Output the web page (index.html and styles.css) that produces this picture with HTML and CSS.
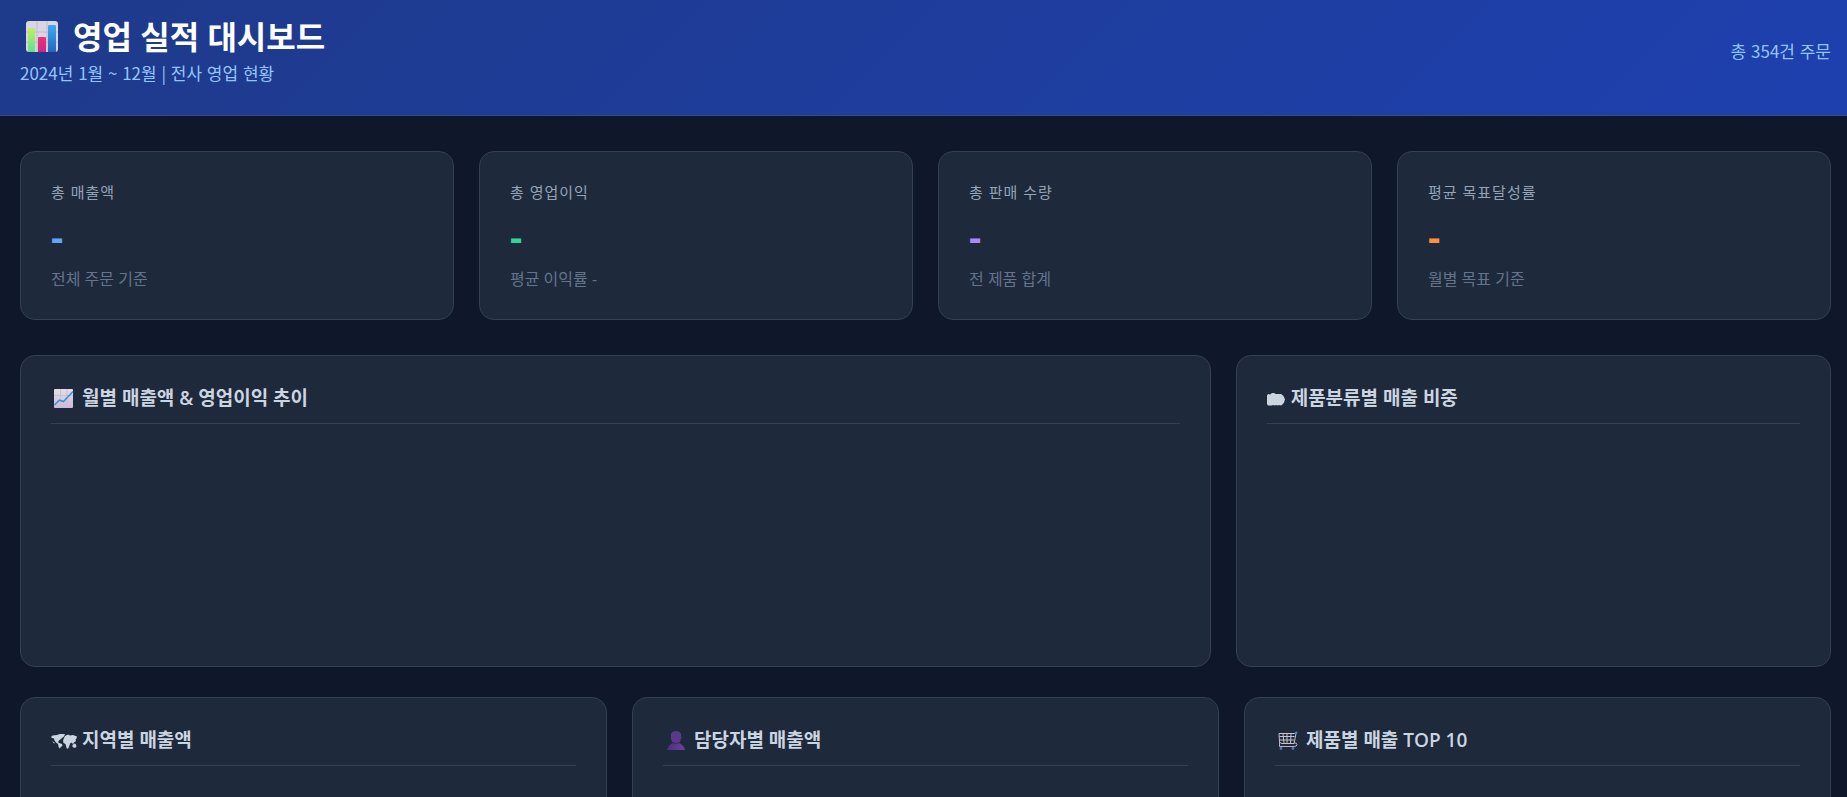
FILE: index.html
```html
<!DOCTYPE html>
<html lang="ko">
<head>
<meta charset="utf-8">
<title>영업 실적 대시보드</title>
<link rel="stylesheet" href="styles.css">
</head>
<body>
<header class="header">
  <div>
    <h1 class="title">
      <svg class="title-icon" viewBox="0 0 44 32" aria-hidden="true">
        <defs>
          <linearGradient id="green" x2="0" y2="1"><stop stop-color="#bdf25c"/><stop offset="1" stop-color="#5fe08e"/></linearGradient>
          <linearGradient id="blue" x2="0" y2="1"><stop stop-color="#3faaf5"/><stop offset="1" stop-color="#2168bd"/></linearGradient>
          <linearGradient id="pink" x2="0" y2="1"><stop stop-color="#f0307a"/><stop offset="1" stop-color="#c92a80"/></linearGradient>
        </defs>
        <rect x="6" y="0" width="32" height="31" rx="3" fill="#dad5e3"/>
        <path d="M17 0v31M27 0v31M6 11h32M6 21h32" stroke="#c3bcce" fill="none"/>
        <path d="M8 31V8q0-1 1-1h5q1 0 1 1v23z" fill="url(#green)"/>
        <path d="M18 31V17q0-1 1-1h6q1 0 1 1v14z" fill="url(#pink)"/>
        <path d="M28 31V5q0-1 1-1h6q1 0 1 1v26z" fill="url(#blue)"/>
      </svg>
      영업 실적 대시보드
    </h1>
    <p class="subtitle">2024년 1월 ~ 12월 | 전사 영업 현황</p>
  </div>
  <p class="order-count">총 354건 주문</p>
</header>
<main class="main">
  <section class="kpis">
    <article class="card"><h2 class="kpi-label">총 매출액</h2><p class="kpi-value blue">-</p><p class="kpi-note">전체 주문 기준</p></article>
    <article class="card"><h2 class="kpi-label">총 영업이익</h2><p class="kpi-value green">-</p><p class="kpi-note">평균 이익률 -</p></article>
    <article class="card"><h2 class="kpi-label">총 판매 수량</h2><p class="kpi-value purple">-</p><p class="kpi-note">전 제품 합계</p></article>
    <article class="card"><h2 class="kpi-label">평균 목표달성률</h2><p class="kpi-value orange">-</p><p class="kpi-note">월별 목표 기준</p></article>
  </section>
  <section class="charts charts-two">
    <article class="card">
      <h2 class="chart-title">
        <svg class="icon" viewBox="0 0 26 20" aria-hidden="true">
          <defs><linearGradient id="paper" x2="0" y2="1"><stop stop-color="#e2dfe8"/><stop offset="1" stop-color="#cdb9dc"/></linearGradient></defs>
          <rect x="3" y="0" width="19" height="19" rx="1" fill="url(#paper)"/>
          <path d="M9.500 0v19M16 0v19M3 6.500h19M3 13h19" stroke="#c9c0d2" fill="none"/>
          <path d="M3.500 16l5-5 4 1.500L22 2.500" stroke="#388fd5" stroke-width="1.500" fill="none"/>
        </svg>
        월별 매출액 &amp; 영업이익 추이
      </h2>
      <div class="chart"></div>
    </article>
    <article class="card">
      <h2 class="chart-title">
        <svg class="icon icon-narrow" viewBox="0 0 19 20" aria-hidden="true">
          <path d="M0 6.500l1-1.500 2 .5L5 4h2l2 1h5l2 1.500 1 1.500 1 2.500-1 3-1 1.500-2 1.500-2-.5-1 .5-2-.5-1 .5-2-.5-1 .5H1l-1-1.500z" fill="#cbd5e1"/>
        </svg>
        제품분류별 매출 비중
      </h2>
      <div class="chart"></div>
    </article>
  </section>
  <section class="charts charts-three">
    <article class="card">
      <h2 class="chart-title">
        <svg class="icon" viewBox="0 0 26 20" aria-hidden="true">
          <path fill="#cbd5e1" d="M0 6l1.500-1.500L6 4l3-1 5 0-1 2.500-2 1.500-1 1-1.500 1L7 11l1 1 3 1 .5 1.500L10 16l-1.500 1.500-1-2L7 13l-2-1.500-1.500-2L3 7.500 1 7zM1 10l3 2-1 .5zM13 7l1-2 3-1.500 2 1 3-.5 4 1.500-.5 2-1 1 .5 1.500-2 1.500-1 2-1-2-2 1-.500 2-1 2.500-1.500 1-1-3-.5-2-2-1-.5-2.500zM21.500 14l2-1.500 1.500 1 .5 2-1.500 1.500-2.500-1z"/>
        </svg>
        지역별 매출액
      </h2>
      <div class="chart"></div>
    </article>
    <article class="card">
      <h2 class="chart-title">
        <svg class="icon" viewBox="0 0 26 20" aria-hidden="true">
          <defs><linearGradient id="person" x2="1" y2="0"><stop stop-color="#4b3179"/><stop offset="1" stop-color="#6a409e"/></linearGradient></defs>
          <path d="M4 19q1-5 6-7h6q5 2 6 7z" fill="url(#person)"/>
          <path d="M8 3q1-3 5-3t5 3v2.500l1 1-1 1q-.5 5-5 5t-5-5z" fill="#5b378d"/>
          <path d="M9 11.500q4 2 8 0" fill="none" stroke="#3b285f"/>
        </svg>
        담당자별 매출액
      </h2>
      <div class="chart"></div>
    </article>
    <article class="card">
      <h2 class="chart-title">
        <svg class="icon" viewBox="0 0 26 20" aria-hidden="true">
          <path d="M4 2.500h17l-2 10H7q-2 0-2.500-2zM4.500 5.500h15M5 9h14M8 3l1 9M12 3v9M16 3l-.5 9" fill="none" stroke="#c8c2ce"/>
          <path d="M4.500 10v5.500H19q3 0 3-2t-3-1.500" fill="none" stroke="#b9b3c4"/>
          <path d="M20 3l2-2" stroke="#4c86d0" stroke-width="2"/>
          <circle cx="6" cy="17.500" r="1.400" fill="#4777bd"/><circle cx="18" cy="17.500" r="1.400" fill="#4777bd"/>
        </svg>
        제품별 매출 TOP 10
      </h2>
      <div class="chart"></div>
    </article>
  </section>
</main>
</body>
</html>
```
FILE: styles.css
```css
* {
  box-sizing: border-box;
  margin: 0;
}

body {
  height: 100vh;
  overflow: hidden;
  background: #0f172a;
  color: #cbd5e1;
  font: 16px/20px "Open Sans", "Noto Sans CJK KR", sans-serif;
}

.header {
  display: flex;
  align-items: center;
  justify-content: space-between;
  padding: 15px 16px 29px 20px;
  border-bottom: 1px solid #334d85;
  background: linear-gradient(135deg, #1e3a8a, #1e40af);
  color: #93c5fd;
  font-size: 17px;
  line-height: 26px;
}

.title {
  display: flex;
  align-items: center;
  gap: 9px;
  color: #fff;
  font-size: 32px;
  font-weight: 700;
  line-height: 44px;
}

.title-icon {
  width: 44px;
  height: 32px;
}

.subtitle,
.order-count {
  font-family: "Noto Sans CJK KR", sans-serif;
}

.subtitle {
  margin-top: 1px;
}

.main {
  display: grid;
  gap: 35px;
  padding: 35px 16px 35px 20px;
}

.kpis,
.charts {
  display: grid;
  gap: 25px;
}

.kpis {
  grid-template-columns: repeat(4, 1fr);
}

.charts-two {
  grid-template-columns: 2fr 1fr;
}

.charts-three {
  grid-template-columns: repeat(3, 1fr);
  margin-top: -5px;
}

.card {
  padding: 30px;
  border: 1px solid #334155;
  border-radius: 15px;
  background: #1e293b;
}

.kpi-label {
  color: #94a3b8;
  font-size: 15px;
  font-weight: 400;
  letter-spacing: 1px;
}

.kpi-value {
  margin: 11px 0 9px;
  font-size: 38px;
  font-weight: 700;
  line-height: 47px;
}

.blue { color: #60a5fa; }
.green { color: #34d399; }
.purple { color: #a78bfa; }
.orange { color: #fb923c; }

.kpi-note {
  color: #64748b;
}

.chart-title {
  display: flex;
  align-items: center;
  gap: 5px;
  padding-bottom: 12px;
  border-bottom: 1px solid #334155;
  font-size: 19px;
  font-weight: 600;
  line-height: 25px;
}

.icon {
  width: 26px;
  height: 20px;
}

.icon-narrow {
  width: 19px;
}

.chart {
  height: 192px;
  margin-top: 20px;
}
```
